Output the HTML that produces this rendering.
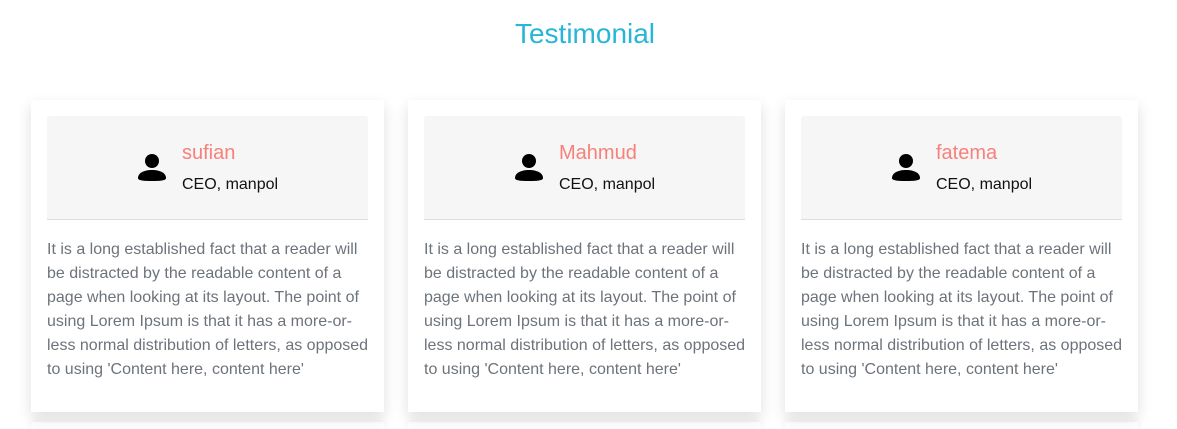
<!DOCTYPE html>
<html><head><style>
html,body{margin:0;width:1177px;height:429px;overflow:hidden}
body{background:#fff;font-family:"Liberation Sans",Arial,sans-serif;position:relative}
h1{position:absolute;top:18px;left:0;width:1170px;text-align:center;margin:0;font-weight:400;font-size:28px;color:#27b6d6}
.card{position:absolute;top:100px;width:353px;height:312px;background:#fff;box-shadow:0 6px 14px rgba(0,0,0,.13)}
.card2{position:absolute;top:422px;width:353px;height:7px;background:#fff;box-shadow:0 -2px 8px rgba(0,0,0,.08)}
.head{position:absolute;left:16px;top:16px;width:321px;height:103px;background:#f6f6f6;border-bottom:1px solid #ddd;border-radius:3px 3px 0 0}
.ic{position:absolute;left:90px;top:37px}
.name{position:absolute;left:135px;top:26px;font-size:20px;color:#f8807a}
.role{position:absolute;left:135px;top:60px;font-size:16px;color:#111}
p{position:absolute;left:16px;top:138px;margin:0;width:330px;font-size:16px;line-height:24px;color:#6c737a}
</style></head><body>
<h1>Testimonial</h1>
<div class="card2" style="left:31px"></div><div class="card2" style="left:408px"></div><div class="card2" style="left:785px"></div>
<div class="card" style="left:31px"><div class="head"><svg class="ic" width="30" height="30" viewBox="0 0 30 30"><circle cx="15" cy="8" r="7"/><path d="M1 25c0-5 6-8 14-8s14 3 14 8c0 2-3 3-14 3S1 27 1 25z"/></svg><div class="name">sufian</div><div class="role">CEO, manpol</div></div><p>It is a long established fact that a reader will be distracted by the readable content of a page when looking at its layout. The point of using Lorem Ipsum is that it has a more-or-less normal distribution of letters, as opposed to using 'Content here, content here'</p></div>
<div class="card" style="left:408px"><div class="head"><svg class="ic" width="30" height="30" viewBox="0 0 30 30"><circle cx="15" cy="8" r="7"/><path d="M1 25c0-5 6-8 14-8s14 3 14 8c0 2-3 3-14 3S1 27 1 25z"/></svg><div class="name">Mahmud</div><div class="role">CEO, manpol</div></div><p>It is a long established fact that a reader will be distracted by the readable content of a page when looking at its layout. The point of using Lorem Ipsum is that it has a more-or-less normal distribution of letters, as opposed to using 'Content here, content here'</p></div>
<div class="card" style="left:785px"><div class="head"><svg class="ic" width="30" height="30" viewBox="0 0 30 30"><circle cx="15" cy="8" r="7"/><path d="M1 25c0-5 6-8 14-8s14 3 14 8c0 2-3 3-14 3S1 27 1 25z"/></svg><div class="name">fatema</div><div class="role">CEO, manpol</div></div><p>It is a long established fact that a reader will be distracted by the readable content of a page when looking at its layout. The point of using Lorem Ipsum is that it has a more-or-less normal distribution of letters, as opposed to using 'Content here, content here'</p></div>
</body></html>
